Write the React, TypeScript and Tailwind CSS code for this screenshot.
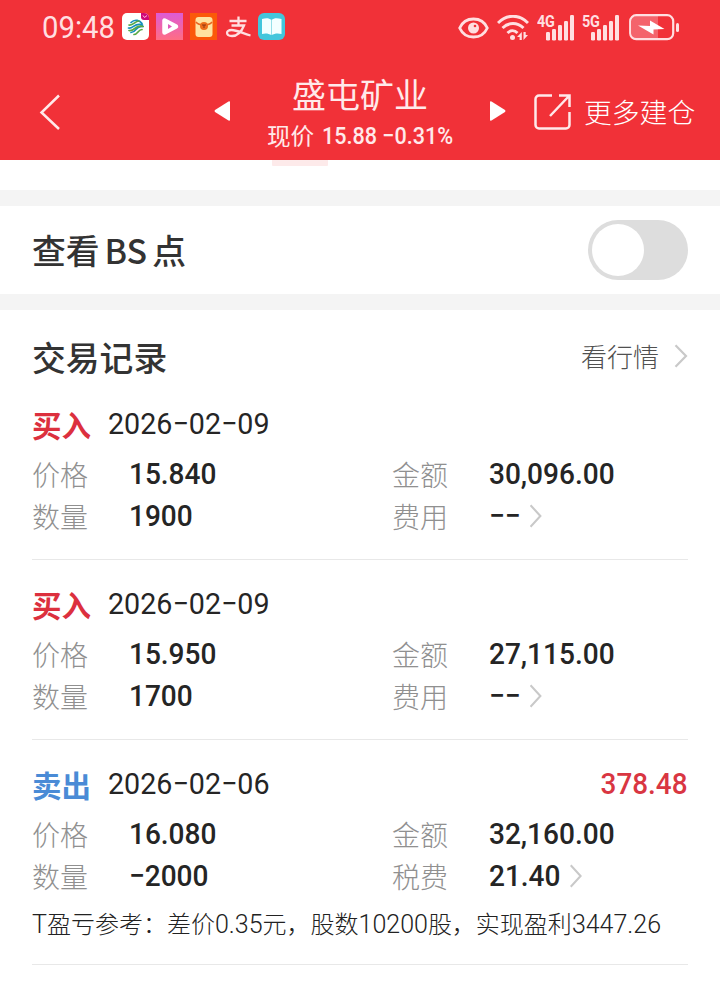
import type { ReactNode } from "react";

const CJK = "font-['Noto_Sans_CJK_SC',sans-serif]";
const NUM = "font-['Roboto','Noto_Sans_CJK_SC',sans-serif]";

function Chevron({ className = "" }: { className?: string }) {
  return (
    <svg className={className} width="14" height="24" viewBox="0 0 14 24" fill="none" stroke="#c9c9c9" strokeWidth="2.2">
      <path d="M1.5 1.2 12 12 1.5 22.8" />
    </svg>
  );
}

function Signal({ label }: { label: string }) {
  return (
    <div className="relative h-[27px] w-[38px]">
      <span className="absolute top-[-1px] left-0 origin-left scale-x-[0.85] font-['Roboto',sans-serif] text-[17px] leading-[16px] font-bold tracking-[-0.4px]">{label}</span>
      <svg className="absolute top-0 left-0" width="38" height="27" viewBox="0 0 38 27" fill="currentColor">
        <rect x="9" y="18" width="4" height="8.5" rx="1.2" />
        <rect x="15" y="15" width="4" height="11.5" rx="1.2" />
        <rect x="21" y="11" width="4" height="15.5" rx="1.2" />
        <rect x="27" y="7" width="4" height="19.5" rx="1.2" />
        <rect x="33" y="1" width="4" height="25.5" rx="1.2" />
      </svg>
    </div>
  );
}

function StatusBar() {
  return (
    <div className="flex h-14 items-center pl-[42px] text-[#ffdfe1]">
      <span className="w-[80px]">
        <span className={`${NUM} inline-block origin-left scale-x-[0.96] text-[30.5px] leading-[54px] whitespace-nowrap`}>09:48</span>
      </span>
      <div className="mb-[3px] flex items-center gap-[7px]">
        <svg width="27" height="27" viewBox="0 0 27 27">
          <rect width="27" height="27" rx="5" fill="#fff" />
          <g fill="none" strokeWidth="1.7" strokeLinecap="round">
            <path d="M9 9.500c4-4 9-2 11 1M6.500 15c5 1 6-6 14-3M9 19.500c6 0 4-7 12-6" stroke="#168fbd" />
            <path d="M7 12c4 1 6-4 10-4M7 17.500c6 1 6-6 14-4M12 21.500c4 0 4-5 8-5" stroke="#58a844" />
          </g>
          <path d="M19 0h3a5 5 0 0 1 5 5v2h-5a3 3 0 0 1-3-3z" fill="#cf0878" />
          <path d="m21 2.500 1.500 2L25 2.500" stroke="#ffc2dd" fill="none" />
        </svg>
        <svg width="27" height="27" viewBox="0 0 27 27">
          <defs>
            <linearGradient id="play" x2="0" y2="1">
              <stop stopColor="#dd5bd6" />
              <stop offset="1" stopColor="#ff6d83" />
            </linearGradient>
          </defs>
          <rect width="27" height="27" fill="url(#play)" />
          <path d="M8.500 7.500v12L20 13.500z" fill="#fff" stroke="#fff" strokeWidth="4.500" strokeLinejoin="round" />
          <path d="m12 11 4 2.500-4 2.500z" fill="#df58bb" />
        </svg>
        <svg width="27" height="27" viewBox="0 0 27 27">
          <rect width="27" height="27" fill="#fb5909" />
          <rect x="5.500" y="4" width="17" height="20" rx="3" fill="#ffe3a0" />
          <path d="M6 9c3 4 13 4 16 0" fill="none" stroke="#e86720" strokeWidth="1.500" />
          <circle cx="14" cy="13" r="4" fill="#ed6c1b" />
          <path d="M12 12h4m-2 0v3" stroke="#8e3515" />
        </svg>
        <svg className="ml-[1px]" width="26" height="27" viewBox="0 0 26 27" fill="none" stroke="currentColor" strokeWidth="2.300">
          <path d="M4.500 8h17M13.500 3.500v9M6.500 12.500H19c-2 5-6 10.500-12 10.500-6.500 0-6.500-6-.5-6 6 0 11 3.500 19 5.500" />
        </svg>
        <svg width="27" height="27" viewBox="0 0 27 27">
          <rect width="27" height="27" rx="6" fill="#43c6dc" />
          <path d="M4 6c4-1 7-1 9.500 1C16 5 19 5 23.500 6v15c-4-1-7-.5-10 1-3-1.500-6-2-9.500-1z" fill="#f3ffff" />
          <path d="M13.500 7v15" stroke="#94dfe8" />
        </svg>
      </div>
      <div className="mb-px ml-[173px] flex items-center">
        <svg width="31" height="22" viewBox="0 0 31 22" fill="none" stroke="currentColor" strokeWidth="2.800">
          <path d="M1.700 11C7-1 24-1 29.300 11 24 23 7 23 1.700 11z" />
          <circle cx="15.500" cy="11" r="5.500" fill="currentColor" stroke="none" />
          <circle cx="17" cy="9" r="1.300" fill="#f03139" stroke="none" />
        </svg>
        <svg className="ml-[8px]" width="32" height="26" viewBox="0 0 32 26" fill="none" stroke="currentColor" strokeWidth="3">
          <path d="M1 8C10-1 22-1 31 8M5.500 13C12 7 20 7 26.500 13M10.500 18c3-3 7-3 10 0" />
          <circle cx="15.500" cy="22.500" r="2.500" fill="currentColor" stroke="none" />
          <path d="M24.800 17v8h-2.200v-3H20zM26.500 25v-8h2.200v3H31z" fill="currentColor" stroke="none" />
        </svg>
        <div className="ml-[8px] flex gap-[7px]">
          <Signal label="4G" />
          <Signal label="5G" />
        </div>
        <svg className="ml-[9px]" width="51" height="27" viewBox="0 0 51 27">
          <path d="M3 6a4 4 0 0 1 4-4h22v23H7a4 4 0 0 1-4-4z" fill="#f4646c" />
          <rect x="1.200" y="1.200" width="43" height="24" rx="6" fill="none" stroke="currentColor" strokeWidth="2.200" />
          <rect x="47" y="9" width="3" height="9" rx="1.500" fill="currentColor" />
          <path d="M9 11.500 21 12V6.500l14.500 8.500-11 .5V20.500z" fill="#fff" />
        </svg>
      </div>
    </div>
  );
}

function NavBar() {
  return (
    <div className="flex h-[104px] items-center pt-[8px] text-[#ffe9ea]">
      <svg className="ml-[39px]" width="22" height="36" viewBox="0 0 22 36" fill="none" stroke="currentColor" strokeWidth="2.500">
        <path d="M20 1.500 2.500 18.500 20 35" />
      </svg>
      <svg className="mb-[2px] ml-[153px]" width="16" height="20" viewBox="0 0 16 20" fill="#fff">
        <path d="M16 1v18q0 1-1.500.5L1 11q-1-1 0-2L14.500.5Q16 0 16 1z" />
      </svg>
      <div className="flex w-[260px] flex-col items-center whitespace-nowrap">
        <div className={`${CJK} h-[46px] text-[34px] leading-[45px]`}>盛屯矿业</div>
        <div className="flex h-[36px] items-center leading-[36px]">
          <span className={`${CJK} mr-[8px] text-[23.6px] leading-[36px]`}>现价</span>
          <span className="h-[34px] w-[131px]">
            <span className={`${NUM} inline-block origin-left scale-x-[0.88] text-[24.5px] leading-[36px] font-medium`}>15.88 −0.31%</span>
          </span>
        </div>
      </div>
      <svg className="mb-[2px]" width="16" height="20" viewBox="0 0 16 20" fill="#fff">
        <path d="M0 1v18q0 1 1.500.5L15 11q1-1 0-2L1.500.5Q0 0 0 1z" />
      </svg>
      <svg className="ml-[28px]" width="37" height="37" viewBox="0 0 37 37" fill="none" stroke="currentColor" strokeWidth="2.500">
        <path d="M18 1.500H5A3.500 3.500 0 0 0 1.500 5v26A3.500 3.500 0 0 0 5 34.500h27a3.500 3.500 0 0 0 3.500-3.500V18M16 22 35 2M25 1.500h10.500V13" />
      </svg>
      <span className={`${CJK} ml-[13px] text-[27.8px] font-light whitespace-nowrap text-white`}>更多建仓</span>
    </div>
  );
}

function Field({ label, children, arrow }: { label: string; children: ReactNode; arrow?: boolean }) {
  return (
    <div className="flex h-[42px] items-center">
      <span className={`${CJK} w-24 text-[28px] leading-[42px] font-light text-[#909090]`}>{label}</span>
      <span className={`${NUM} flex origin-left scale-x-[0.935] items-center pl-px text-[30px] leading-[42px] font-medium whitespace-nowrap text-[#252525]`}>
        {children}
        {arrow && <Chevron className="ml-[9px]" />}
      </span>
    </div>
  );
}

type Trade = {
  side: "买入" | "卖出";
  date: string;
  price: string;
  amount: string;
  quantity: string;
  feeLabel: string;
  fee: string;
  profit?: string;
  note?: ReactNode;
};

function Latin({ children }: { children: ReactNode }) {
  return <span className="font-['Roboto',sans-serif] text-[25px] font-[350]">{children}</span>;
}

const trades: Trade[] = [
  { side: "买入", date: "2026−02−09", price: "15.840", amount: "30,096.00", quantity: "1900", feeLabel: "费用", fee: "−−" },
  { side: "买入", date: "2026−02−09", price: "15.950", amount: "27,115.00", quantity: "1700", feeLabel: "费用", fee: "−−" },
  {
    side: "卖出",
    date: "2026−02−06",
    price: "16.080",
    amount: "32,160.00",
    quantity: "−2000",
    feeLabel: "税费",
    fee: "21.40",
    profit: "378.48",
    note: (
      <>
        <Latin>T</Latin>盈亏参考：差价<Latin>0.35</Latin>元，股数<Latin>10200</Latin>股，实现盈利<Latin>3447.26</Latin>
      </>
    ),
  },
];

function Record({ trade }: { trade: Trade }) {
  return (
    <article className={`mx-8 border-b border-[#e8e8e8] pt-6 ${trade.note ? "h-[225px]" : "h-[180px]"}`}>
      <div className="flex h-[39px] items-center whitespace-nowrap">
        <span className={`${CJK} w-[76px] text-[29.5px] leading-[38px] font-bold ${trade.side === "买入" ? "text-[#dc303e]" : "text-[#4a8bd6]"}`}>{trade.side}</span>
        <span className={`${NUM} origin-left scale-x-[0.955] text-[30px] leading-[38px] font-[450] text-[#252525]`}>{trade.date}</span>
        {trade.profit && (
          <span className={`${NUM} ml-auto origin-right scale-x-[0.93] text-[30px] leading-[38px] font-medium text-[#d93642]`}>{trade.profit}</span>
        )}
      </div>
      <div className="mt-[10px] grid grid-cols-[360px_1fr]">
        <Field label="价格">{trade.price}</Field>
        <Field label="金额">{trade.amount}</Field>
        <Field label="数量">{trade.quantity}</Field>
        <Field label={trade.feeLabel} arrow>
          {trade.fee}
        </Field>
      </div>
      {trade.note && <p className={`${CJK} mt-[6px] text-[24px] leading-10 font-light whitespace-nowrap text-[#222]`}>{trade.note}</p>}
    </article>
  );
}

export default function App() {
  return (
    <main className="h-[985px] w-[720px] overflow-hidden bg-white">
      <header className="h-40 bg-[#f13138]">
        <StatusBar />
        <NavBar />
      </header>
      <div className="h-[30px]">
        <div className="ml-[272px] h-[6px] w-14 rounded-b-[1px] bg-[#fdeaea]" />
      </div>
      <div className="h-4 bg-[#f4f4f4]" />
      <section className="flex h-[88px] items-center justify-between px-8">
        <span className={`${CJK} text-[33.8px] font-medium text-[#333]`}>
          查看<span className="mx-[5px]">BS</span>点
        </span>
        <button className="flex h-[60px] w-[100px] items-center rounded-full bg-[#ddd] p-1" aria-label="查看BS点">
          <span className="size-[52px] rounded-full bg-white" />
        </button>
      </section>
      <div className="h-4 bg-[#f4f4f4]" />
      <section>
        <div className="flex h-[70px] items-center justify-between px-8 pt-6">
          <h2 className={`${CJK} text-[33.8px] leading-[46px] font-medium text-[#333]`}>交易记录</h2>
          <div className="mb-[2px] flex items-center">
            <span className={`${CJK} text-[26px] leading-[46px] font-light text-[#505050]`}>看行情</span>
            <Chevron className="ml-[15px]" />
          </div>
        </div>
        {trades.map((trade, index) => (
          <Record key={index} trade={trade} />
        ))}
      </section>
    </main>
  );
}
